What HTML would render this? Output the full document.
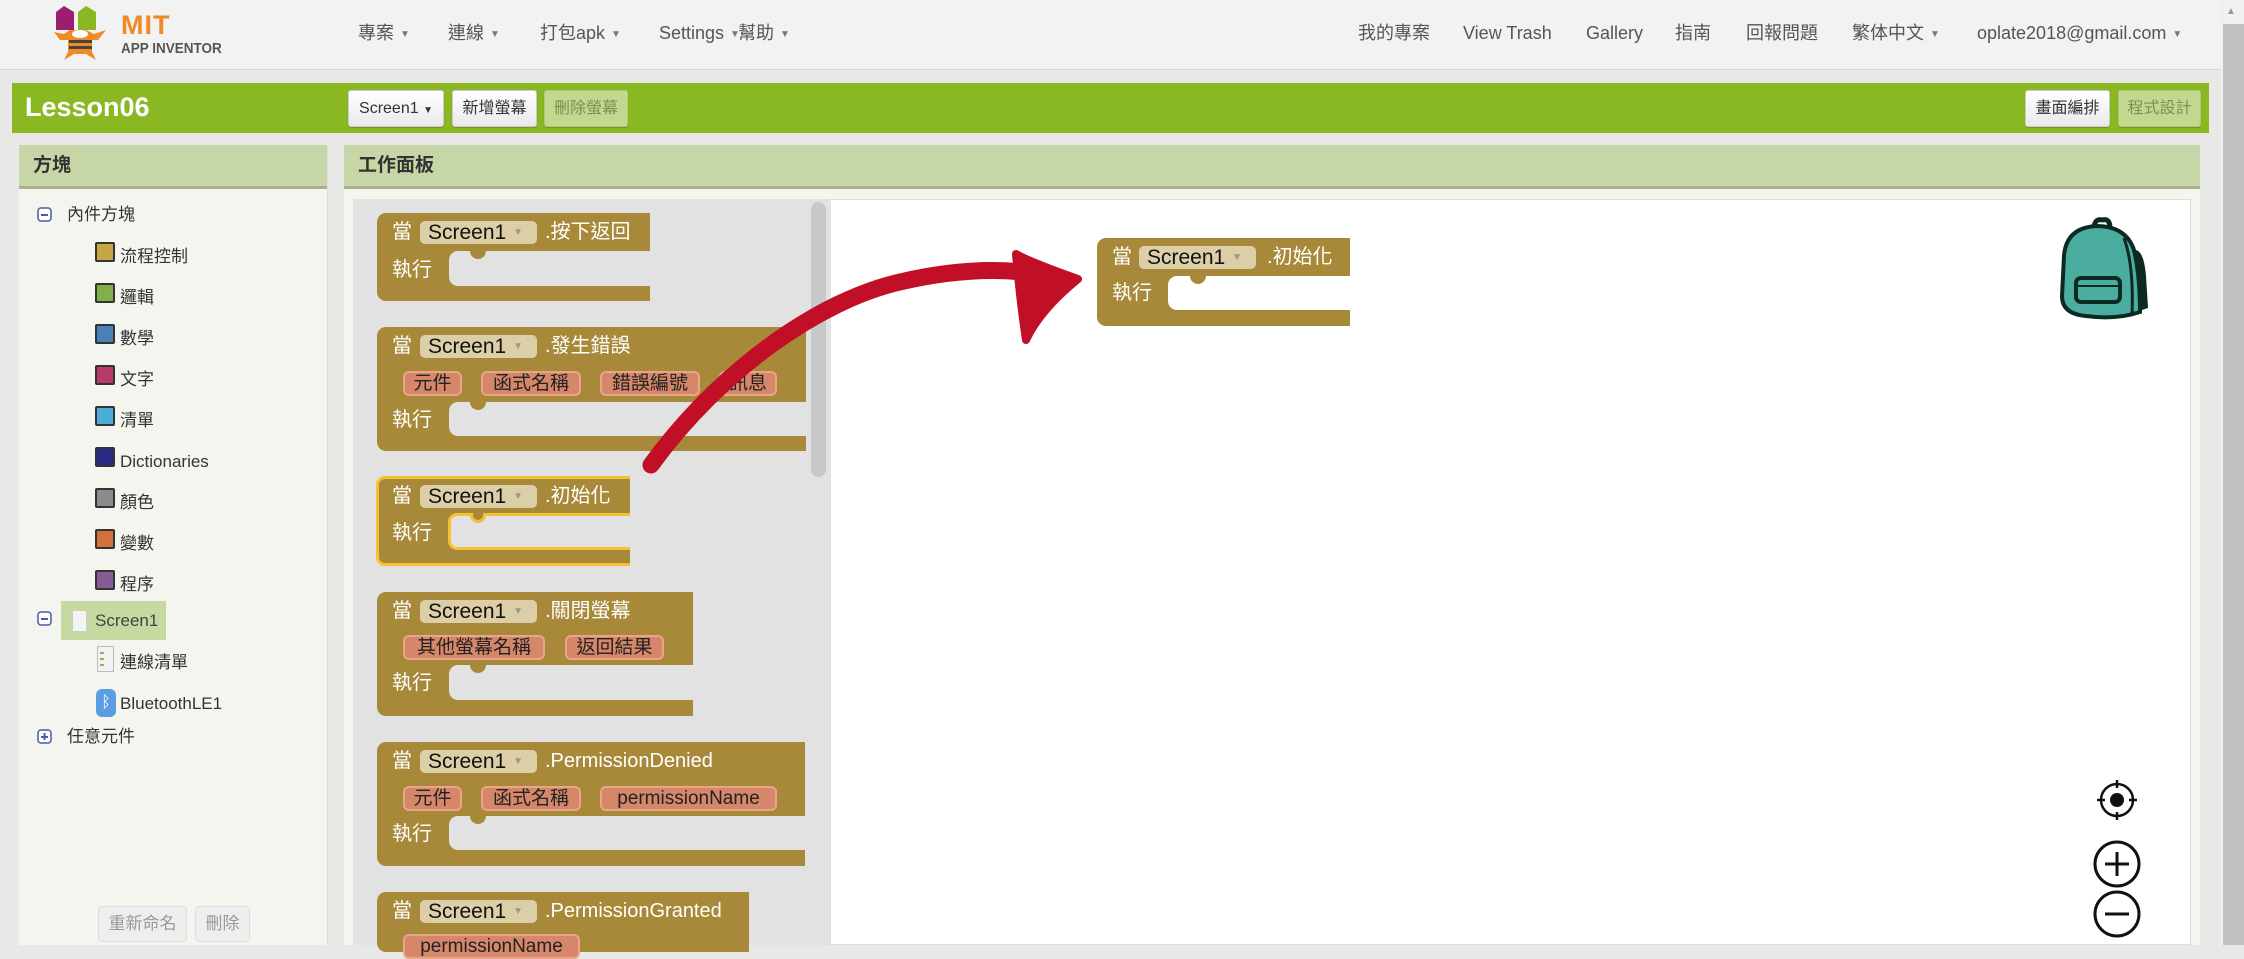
<!DOCTYPE html>
<html><head><meta charset="utf-8">
<style>
*{box-sizing:border-box;margin:0;padding:0}
body{width:2244px;height:945px;overflow:hidden;background:#e8e8e6;font-family:"Liberation Sans","Noto Sans CJK TC",sans-serif;position:relative}
.a{position:absolute}
.nav{left:0;top:0;width:2221px;height:70px;background:#f2f2f2;border-bottom:1px solid #d6d6d6}
.mi{position:absolute;top:20px;font-size:18px;line-height:26px;height:26px;color:#555;white-space:nowrap}
.car{font-size:10px;color:#777;margin-left:6px;vertical-align:2px}
.green{left:12px;top:83px;width:2197px;height:50px;background:#8ab822}
.btn{position:absolute;top:7px;height:37px;background:linear-gradient(#fff,#e9e9e9);border:1px solid #ccc;border-radius:3px;font-size:16px;color:#333;text-align:center;line-height:35px;box-shadow:0 1px 1px rgba(0,0,0,.2)}
.btn.dis{background:#c2d88f;color:#7d8f55;border-color:#b4c97f}
.ph{background:#c6d6a6;border-bottom:3px solid #aab08f;height:44px;font-size:19px;color:#333;font-weight:bold;line-height:42px;padding-left:14px}
.tr{position:absolute;font-size:17px;line-height:20px;height:20px;color:#333;white-space:nowrap}
.sq{position:absolute;width:20px;height:20px;border:2px solid #333;border-radius:2px}
.blk{position:absolute;background:#a8893a;border-radius:9px 0 0 9px}
.slot{position:absolute;background:#e2e2e2;border-radius:9px 0 0 9px}
.tab{position:absolute;width:16px;height:8px;background:#a8893a;border-radius:0 0 8px 8px}
.t{position:absolute;color:#fff;font-size:20px;line-height:26px;height:26px;white-space:nowrap}
.dd{position:absolute;background:#dccfa8;border-radius:5px;height:23px;width:117px;color:#111;font-size:21px;line-height:23px;padding-left:8px}
.dd i{position:absolute;right:14px;top:0;font-style:normal;font-size:10px;color:#998;}
.pp{position:absolute;background:#d6876a;border:2px solid #e8a58a;border-radius:6px;height:25px;color:#222;font-size:19px;line-height:21px;text-align:center;white-space:nowrap}
</style></head><body>
<div class="a nav">
 <svg class="a" style="left:52px;top:4px" width="60" height="56" viewBox="0 0 60 56">
  <path d="M4 8 L12 2 L22 8 L22 26 L4 26Z" fill="#9b1f6e"/><path d="M26 8 L34 2 L44 8 L44 26 L26 26Z" fill="#8ab822"/>
  <path d="M2 28 L12 30 L18 26 L34 26 L42 30 L54 26 L46 36 L40 36 L40 48 L44 56 L34 50 L22 50 L12 56 L16 48 L16 36 L8 36Z" fill="#f08a24"/>
  <rect x="17" y="36" width="23" height="3" fill="#444"/><rect x="17" y="42" width="23" height="3" fill="#444"/><ellipse cx="28" cy="30" rx="8" ry="4" fill="#fff"/>
 </svg>
 <div class="a" style="left:121px;top:10px;font-size:27px;font-weight:bold;color:#f08a24;letter-spacing:1px">MIT</div>
 <div class="a" style="left:121px;top:40px;font-size:15px;font-weight:bold;color:#555;transform:scaleX(.9);transform-origin:left">APP INVENTOR</div>
 <div class="mi" style="left:358px">專案<span class="car">▼</span></div>
 <div class="mi" style="left:448px">連線<span class="car">▼</span></div>
 <div class="mi" style="left:540px">打包apk<span class="car">▼</span></div>
 <div class="mi" style="left:659px">Settings<span class="car">▼</span></div>
 <div class="mi" style="left:738px">幫助<span class="car">▼</span></div>
 <div class="mi" style="left:1358px">我的專案</div>
 <div class="mi" style="left:1463px">View Trash</div>
 <div class="mi" style="left:1586px">Gallery</div>
 <div class="mi" style="left:1675px">指南</div>
 <div class="mi" style="left:1746px">回報問題</div>
 <div class="mi" style="left:1852px">繁体中文<span class="car">▼</span></div>
 <div class="mi" style="left:1977px">oplate2018@gmail.com<span class="car">▼</span></div>
</div>
<div class="a" style="left:2221px;top:0;width:23px;height:945px;background:#f0f0f0"></div>
<div class="a" style="left:2223px;top:24px;width:21px;height:921px;background:#c1c1c1"></div>
<div class="a" style="left:2226px;top:6px;font-size:10px;color:#999">▲</div>

<div class="a green">
 <div class="a" style="left:13px;top:9px;font-size:27px;font-weight:bold;color:#fff">Lesson06</div>
 <div class="btn" style="left:336px;width:96px">Screen1 <span style="font-size:10px">▼</span></div>
 <div class="btn" style="left:440px;width:85px">新增螢幕</div>
 <div class="btn dis" style="left:532px;width:84px">刪除螢幕</div>
 <div class="btn" style="left:2013px;width:85px">畫面編排</div>
 <div class="btn dis" style="left:2106px;width:83px">程式設計</div>
</div>

<!-- left panel -->
<div class="a" style="left:19px;top:145px;width:309px;height:800px;background:#f5f5f0;border-right:1px solid #ddd">
 <div class="ph">方塊</div>
</div>
<svg class="a" style="left:37px;top:207px" width="16" height="16"><rect x="1" y="1" width="13" height="13" rx="3" fill="#fff" stroke="#4a5aa8" stroke-width="1.5"/><rect x="4" y="7" width="7" height="2" fill="#4a5aa8"/></svg>
<div class="tr" style="left:67px;top:205px">內件方塊</div>
<div class="sq" style="left:95px;top:242px;background:#c9a644"></div><div class="tr" style="left:120px;top:247px">流程控制</div>
<div class="sq" style="left:95px;top:283px;background:#7fb04a"></div><div class="tr" style="left:120px;top:288px">邏輯</div>
<div class="sq" style="left:95px;top:324px;background:#4a7fb8"></div><div class="tr" style="left:120px;top:329px">數學</div>
<div class="sq" style="left:95px;top:365px;background:#b93a6a"></div><div class="tr" style="left:120px;top:370px">文字</div>
<div class="sq" style="left:95px;top:406px;background:#4aaed6"></div><div class="tr" style="left:120px;top:411px">清單</div>
<div class="sq" style="left:95px;top:447px;background:#2a2a85"></div><div class="tr" style="left:120px;top:452px">Dictionaries</div>
<div class="sq" style="left:95px;top:488px;background:#8c8c8c"></div><div class="tr" style="left:120px;top:493px">顏色</div>
<div class="sq" style="left:95px;top:529px;background:#d4713a"></div><div class="tr" style="left:120px;top:534px">變數</div>
<div class="sq" style="left:95px;top:570px;background:#855c96"></div><div class="tr" style="left:120px;top:575px">程序</div>
<svg class="a" style="left:37px;top:611px" width="16" height="16"><rect x="1" y="1" width="13" height="13" rx="3" fill="#fff" stroke="#4a5aa8" stroke-width="1.5"/><rect x="4" y="7" width="7" height="2" fill="#4a5aa8"/></svg>
<div class="a" style="left:61px;top:601px;width:105px;height:39px;background:#c6d9a0"></div>
<div class="a" style="left:72px;top:607px;width:15px;height:25px;background:#f4f4f4;border:1px solid #ccc;border-top:4px solid #c6d89a"></div>
<div class="tr" style="left:95px;top:611px;color:#444">Screen1</div>
<div class="a" style="left:97px;top:646px;width:17px;height:26px;background:#f2f2f2;border:1px solid #bbb"></div>
<div class="a" style="left:100px;top:652px;width:4px;height:2px;background:#8b4"></div><div class="a" style="left:100px;top:658px;width:4px;height:2px;background:#8b4"></div><div class="a" style="left:100px;top:664px;width:4px;height:2px;background:#8b4"></div>
<div class="tr" style="left:120px;top:653px">連線清單</div>
<div class="a" style="left:96px;top:689px;width:20px;height:28px;background:#5b9ee0;border-radius:6px;color:#fff;font-size:16px;text-align:center;line-height:28px">ᛒ</div>
<div class="tr" style="left:120px;top:694px">BluetoothLE1</div>
<svg class="a" style="left:37px;top:729px" width="16" height="16"><rect x="1" y="1" width="13" height="13" rx="3" fill="#fff" stroke="#4a5aa8" stroke-width="1.5"/><rect x="4" y="7" width="7" height="2" fill="#4a5aa8"/><rect x="6.5" y="4" width="2" height="7" fill="#4a5aa8"/></svg>
<div class="tr" style="left:67px;top:727px">任意元件</div>
<div class="a" style="left:98px;top:906px;width:89px;height:36px;border:1px solid #ddd;border-radius:4px;background:#eee;color:#999;font-size:17px;text-align:center;line-height:34px">重新命名</div>
<div class="a" style="left:195px;top:906px;width:55px;height:36px;border:1px solid #ddd;border-radius:4px;background:#eee;color:#999;font-size:17px;text-align:center;line-height:34px">刪除</div>

<!-- right panel -->
<div class="a" style="left:344px;top:145px;width:1856px;height:800px;background:#f5f5f0">
 <div class="ph">工作面板</div>
</div>
<div class="a" style="left:353px;top:199px;width:1838px;height:746px;background:#fff;border:1px solid #ddd"></div>
<div class="a" style="left:353px;top:199px;width:478px;height:746px;background:#e2e2e2"></div>
<div class="a" style="left:811px;top:202px;width:15px;height:275px;background:#c8c8c8;border-radius:8px"></div>

<!-- block 1 -->
<div class="blk" style="left:377px;top:213px;width:273px;height:88px"></div>
<div class="slot" style="left:449px;top:251px;width:201px;height:35px"></div><div class="tab" style="left:470px;top:251px"></div>
<div class="t" style="left:392px;top:219px">當</div><div class="dd" style="left:420px;top:221px">Screen1<i>▼</i></div><div class="t" style="left:545px;top:219px">.按下返回</div>
<div class="t" style="left:392px;top:257px">執行</div>
<!-- block 2 -->
<div class="blk" style="left:377px;top:327px;width:429px;height:124px"></div>
<div class="slot" style="left:449px;top:402px;width:357px;height:34px"></div><div class="tab" style="left:470px;top:402px"></div>
<div class="t" style="left:392px;top:333px">當</div><div class="dd" style="left:420px;top:335px">Screen1<i>▼</i></div><div class="t" style="left:545px;top:333px">.發生錯誤</div>
<div class="pp" style="left:403px;top:371px;width:59px">元件</div><div class="pp" style="left:481px;top:371px;width:100px">函式名稱</div><div class="pp" style="left:600px;top:371px;width:100px">錯誤編號</div><div class="pp" style="left:719px;top:371px;width:58px">訊息</div>
<div class="t" style="left:392px;top:407px">執行</div>
<!-- block 3 selected -->
<div class="blk" style="left:376px;top:476px;width:254px;height:90px;border:3px solid #f3c232;border-right:none"></div>
<div class="slot" style="left:448px;top:513px;width:182px;height:37px;border:3px solid #f3c232;border-right:none"></div><div class="tab" style="left:470px;top:513px;border:3px solid #f3c232;border-top:none;height:10px"></div>
<div class="t" style="left:392px;top:483px">當</div><div class="dd" style="left:420px;top:485px">Screen1<i>▼</i></div><div class="t" style="left:545px;top:483px">.初始化</div>
<div class="t" style="left:392px;top:520px">執行</div>
<!-- block 4 -->
<div class="blk" style="left:377px;top:592px;width:316px;height:124px"></div>
<div class="slot" style="left:449px;top:665px;width:244px;height:35px"></div><div class="tab" style="left:470px;top:665px"></div>
<div class="t" style="left:392px;top:598px">當</div><div class="dd" style="left:420px;top:600px">Screen1<i>▼</i></div><div class="t" style="left:545px;top:598px">.關閉螢幕</div>
<div class="pp" style="left:403px;top:635px;width:142px">其他螢幕名稱</div><div class="pp" style="left:565px;top:635px;width:99px">返回結果</div>
<div class="t" style="left:392px;top:670px">執行</div>
<!-- block 5 -->
<div class="blk" style="left:377px;top:742px;width:428px;height:124px"></div>
<div class="slot" style="left:449px;top:816px;width:356px;height:34px"></div><div class="tab" style="left:470px;top:816px"></div>
<div class="t" style="left:392px;top:748px">當</div><div class="dd" style="left:420px;top:750px">Screen1<i>▼</i></div><div class="t" style="left:545px;top:748px">.PermissionDenied</div>
<div class="pp" style="left:403px;top:786px;width:59px">元件</div><div class="pp" style="left:481px;top:786px;width:100px">函式名稱</div><div class="pp" style="left:600px;top:786px;width:177px">permissionName</div>
<div class="t" style="left:392px;top:821px">執行</div>
<!-- block 6 -->
<div class="blk" style="left:377px;top:892px;width:372px;height:60px"></div>
<div class="t" style="left:392px;top:898px">當</div><div class="dd" style="left:420px;top:900px">Screen1<i>▼</i></div><div class="t" style="left:545px;top:898px">.PermissionGranted</div>
<div class="pp" style="left:403px;top:934px;width:177px">permissionName</div>

<!-- canvas block -->
<div class="blk" style="left:1097px;top:238px;width:253px;height:88px"></div>
<div class="slot" style="left:1168px;top:276px;width:182px;height:34px;background:#fff"></div><div class="tab" style="left:1190px;top:276px"></div>
<div class="t" style="left:1112px;top:244px">當</div><div class="dd" style="left:1139px;top:246px">Screen1<i>▼</i></div><div class="t" style="left:1267px;top:244px">.初始化</div>
<div class="t" style="left:1112px;top:280px">執行</div>

<!-- arrow -->
<svg class="a" style="left:0;top:0" width="2244" height="945">
 <path d="M651 465 C720 370 820 300 900 282 C960 268 1010 268 1050 276" fill="none" stroke="#c20f28" stroke-width="17" stroke-linecap="round"/>
 <path d="M1016 254 Q1030 262 1078 279 Q1040 310 1026 340 Q1020 300 1016 254Z" fill="#c20f28" stroke="#c20f28" stroke-width="8" stroke-linejoin="round"/>
</svg>

<!-- backpack -->
<svg class="a" style="left:2056px;top:216px" width="102" height="104" viewBox="0 0 102 104">
 <path d="M62 30 L80 34 Q88 36 90 60 L92 92 L80 96Z" fill="#0d2a22"/>
 <path d="M38 10 Q40 2 46 4 Q54 2 54 12" fill="none" stroke="#0d2a22" stroke-width="5"/>
 <path d="M8 40 Q10 12 40 10 Q70 10 78 34 Q84 60 84 96 Q60 104 30 100 Q6 98 6 80Z" fill="#4aada0" stroke="#0d2a22" stroke-width="4"/>
 <path d="M68 22 Q78 50 76 98" fill="none" stroke="#0d2a22" stroke-width="3"/>
 <rect x="20" y="62" width="44" height="24" rx="5" fill="#4aada0" stroke="#0d2a22" stroke-width="4"/>
 <line x1="22" y1="70" x2="62" y2="70" stroke="#0d2a22" stroke-width="2"/>
</svg>
<!-- zoom controls -->
<svg class="a" style="left:2090px;top:774px" width="56" height="165">
 <circle cx="27" cy="26" r="16" fill="none" stroke="#111" stroke-width="2.5"/><circle cx="27" cy="26" r="7" fill="#111"/>
 <path d="M27 6v8M27 38v8M7 26h8M39 26h8" stroke="#111" stroke-width="2.5"/>
 <circle cx="27" cy="90" r="22" fill="none" stroke="#111" stroke-width="3"/><path d="M15 90h24M27 78v24" stroke="#111" stroke-width="3"/>
 <circle cx="27" cy="140" r="22" fill="none" stroke="#111" stroke-width="3"/><path d="M15 140h24" stroke="#111" stroke-width="3"/>
</svg>
</body></html>
